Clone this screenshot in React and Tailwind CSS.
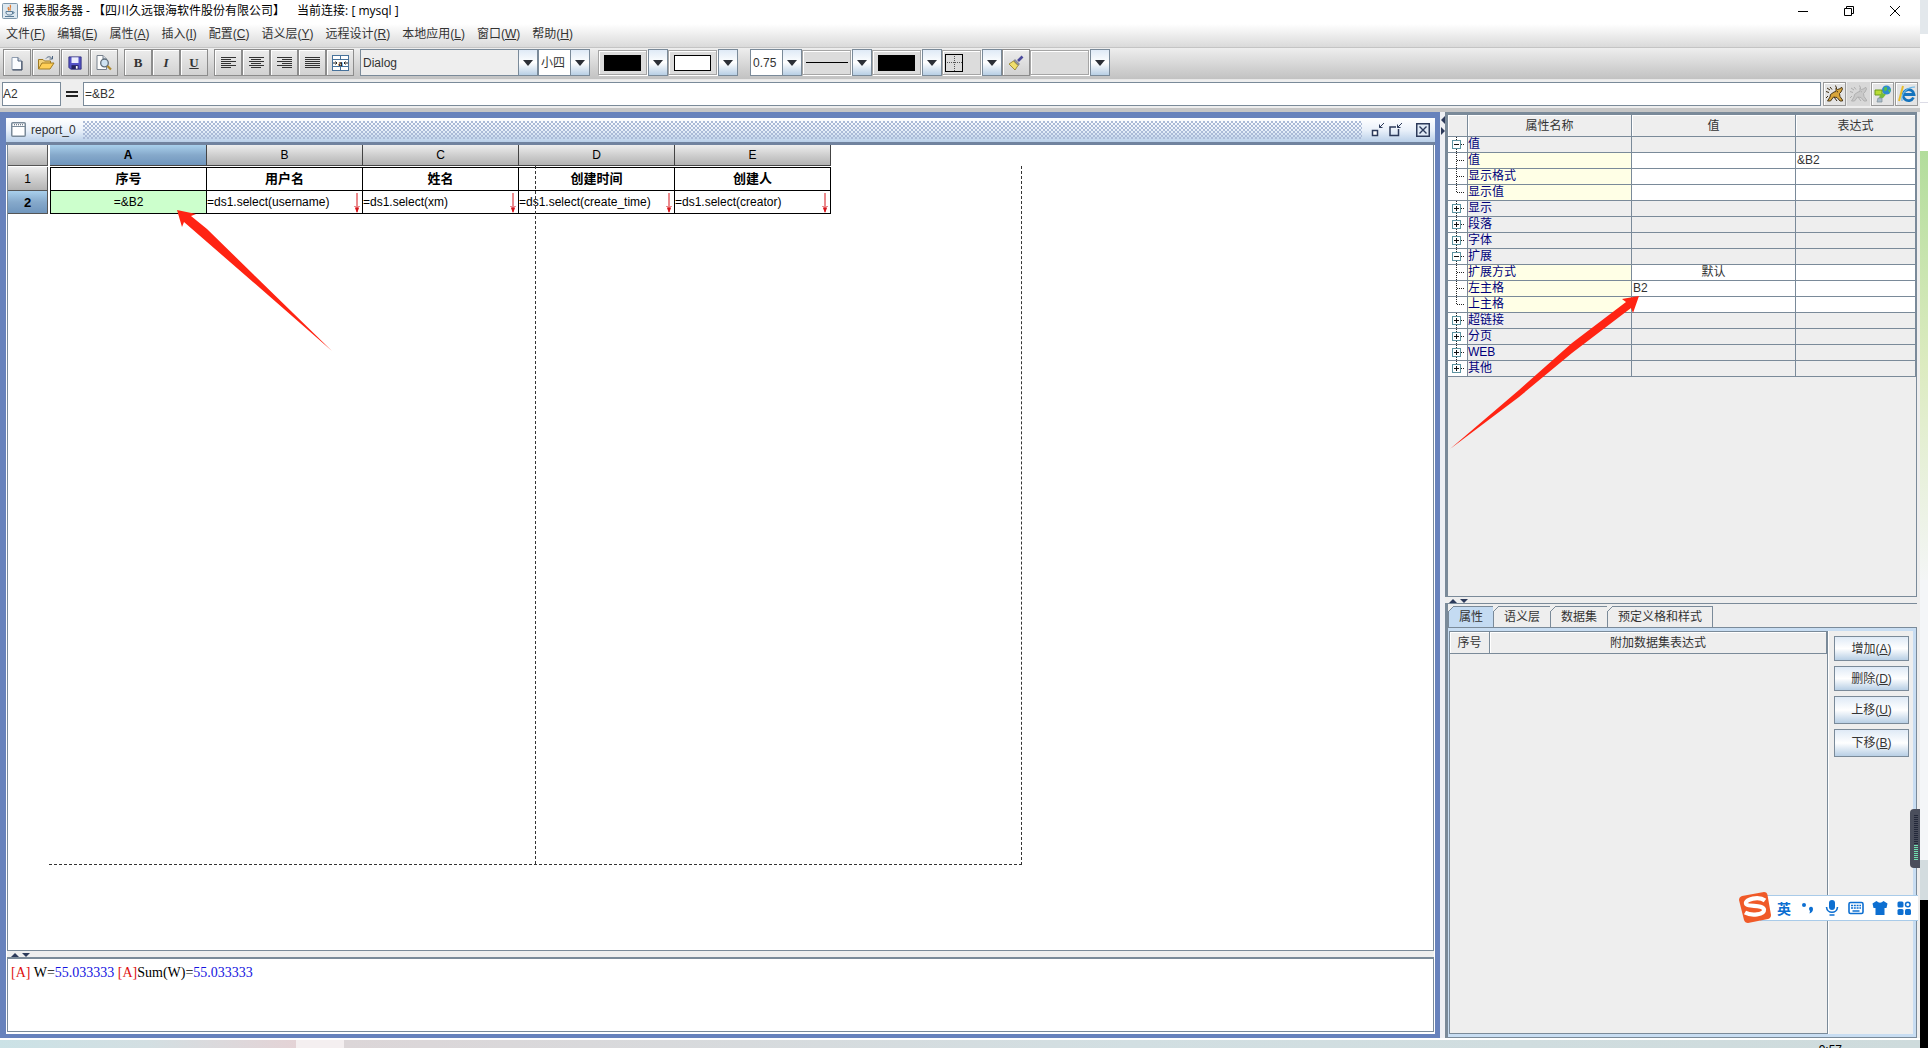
import React from "react";

const MENUS = [
  ["文件", "F"],
  ["编辑", "E"],
  ["属性", "A"],
  ["插入", "I"],
  ["配置", "C"],
  ["语义层", "Y"],
  ["远程设计", "R"],
  ["本地应用", "L"],
  ["窗口", "W"],
  ["帮助", "H"],
];

const COLUMNS = ["A", "B", "C", "D", "E"];
const HEADINGS = ["序号", "用户名", "姓名", "创建时间", "创建人"];
const FORMULAS = [
  "=&B2",
  "=ds1.select(username)",
  "=ds1.select(xm)",
  "=ds1.select(create_time)",
  "=ds1.select(creator)",
];

const PROPERTIES = [
  { name: "值", kind: "open" },
  { name: "值", kind: "leaf", expr: "&B2" },
  { name: "显示格式", kind: "leaf" },
  { name: "显示值", kind: "last" },
  { name: "显示", kind: "closed" },
  { name: "段落", kind: "closed" },
  { name: "字体", kind: "closed" },
  { name: "扩展", kind: "open" },
  { name: "扩展方式", kind: "leaf", value: "默认", center: true },
  { name: "左主格", kind: "leaf", value: "B2" },
  { name: "上主格", kind: "last" },
  { name: "超链接", kind: "closed" },
  { name: "分页", kind: "closed" },
  { name: "WEB", kind: "closed" },
  { name: "其他", kind: "closed", end: true },
];

const toolButton =
  "flex h-[27px] w-7 shrink-0 items-center justify-center border border-[#8c8c8c] bg-gradient-to-b from-[#ececec] to-[#d2d2d2] shadow-[inset_1px_1px_0_#fff]";

function ToolButton({ label, children }) {
  return (
    <button type="button" aria-label={label} className={toolButton}>
      {children}
    </button>
  );
}

function Triangle() {
  return (
    <svg width="10" height="6" viewBox="0 0 10 6" aria-hidden="true">
      <path d="M0 0H10L5 6Z" fill="#2b2f36" />
    </svg>
  );
}

function DropArrow({ label }) {
  return (
    <button
      type="button"
      aria-label={label}
      className="flex h-[27px] w-5 shrink-0 items-center justify-center border border-[#7a8a99] bg-gradient-to-b from-[#dfeaf6] via-white to-[#b8cfe5]"
    >
      <Triangle />
    </button>
  );
}

function Combo({ label, value, className }) {
  return (
    <div className={"relative h-[27px] shrink-0 " + className}>
      <select
        aria-label={label}
        defaultValue={value}
        className="h-full w-full appearance-none border border-[#7a8a99] bg-transparent pl-0.5 text-xs text-[#333] outline-none"
      >
        <option>{value}</option>
      </select>
      <span className="pointer-events-none absolute inset-y-0 right-0 flex w-5 items-center justify-center border border-[#7a8a99] bg-gradient-to-b from-[#dfeaf6] via-white to-[#b8cfe5]">
        <Triangle />
      </span>
    </div>
  );
}

function Picker({ label, width, children }) {
  return (
    <div className="flex shrink-0 items-center gap-px">
      <button
        type="button"
        aria-label={label}
        className={
          "flex h-[25px] items-center border border-[#a5a5a5] bg-[#dcdcdc] shadow-[inset_1px_1px_0_#fff,1px_1px_0_#fff] " + width
        }
      >
        {children}
      </button>
      <DropArrow label={label + "选项"} />
    </div>
  );
}

function AlignIcon({ kind }) {
  const rows = [0, 1, 2, 3, 4, 5];
  return (
    <svg width="15" height="14" viewBox="0 0 15 14" aria-hidden="true">
      {rows.map((i) => {
        const w = kind === "full" || i % 2 === 0 ? 15 : 10;
        const x = kind === "right" ? 15 - w : kind === "center" ? Math.floor((15 - w) / 2) : 0;
        return <rect key={i} x={x} y={i * 2 + 1} width={w} height="1" fill="#333" />;
      })}
    </svg>
  );
}

function JavaIcon() {
  return (
    <svg width="16" height="16" viewBox="0 0 16 16" aria-hidden="true">
      <rect x="0.5" y="0.5" width="15" height="15" rx="1" fill="#dde8f0" stroke="#7d97ab" />
      <path d="M8 2C10 4 6.500 5 8.500 7.500M6.500 4C5.500 5.500 6 6 7 7.500" stroke="#e07a2c" strokeWidth="1.200" fill="none" />
      <path d="M4 8.500H10.500V10C10.500 11.500 9.500 12 7.500 12S4.500 11.500 4 10ZM10.500 9H12C12.500 10 11.500 10.800 10.200 10.800" fill="none" stroke="#5b7c97" strokeWidth="1" />
      <path d="M3 13.500H12" stroke="#5b7c97" />
    </svg>
  );
}

function NewIcon() {
  return (
    <svg width="14" height="16" viewBox="0 0 14 16" aria-hidden="true">
      <path d="M2 2.500H8L11.500 6V14.500H2Z" fill="#fafcff" stroke="#8f9db0" />
      <path d="M12 6V15H2.500" fill="none" stroke="#2e3c55" />
      <path d="M8 2.500V6H11.500" fill="#cdd9e8" stroke="#55657c" />
    </svg>
  );
}

function OpenIcon() {
  return (
    <svg width="18" height="16" viewBox="0 0 18 16" aria-hidden="true">
      <path d="M1.500 14V4.500H6L7.500 6H13.500V8" fill="#f3d27a" stroke="#a07a22" />
      <path d="M1.500 14L5 8H17L13 14Z" fill="#ffcf56" stroke="#a07a22" />
      <path d="M9 3.500C11 1 13.500 1.500 15 3.500M15.500 1V4H12.500" fill="none" stroke="#49627f" />
    </svg>
  );
}

function SaveIcon() {
  return (
    <svg width="14" height="14" viewBox="0 0 16 16" aria-hidden="true">
      <path d="M1 1H15V15H3L1 13Z" fill="#5453c6" stroke="#2e2d7d" />
      <rect x="4" y="1.500" width="8" height="6.500" fill="#eceefd" />
      <rect x="4" y="10.500" width="8" height="4.500" fill="#23235c" />
      <rect x="9" y="11.500" width="2" height="3" fill="#fff" />
    </svg>
  );
}

function PreviewIcon() {
  return (
    <svg width="18" height="17" viewBox="0 0 18 17" aria-hidden="true">
      <path d="M2 1.500H8L11.500 5V15.500H2Z" fill="#fdfdfd" stroke="#77808c" />
      <path d="M8 1.500V5H11.500" fill="#d6dde6" stroke="#77808c" />
      <circle cx="9.500" cy="9" r="3.800" fill="#cfe3f2" stroke="#5f6d7a" strokeWidth="1.300" />
      <path d="M12.500 12L16 15.500" stroke="#b08a2c" strokeWidth="2.200" />
    </svg>
  );
}

function MergeIcon() {
  return (
    <svg width="17" height="16" viewBox="0 0 17 16" aria-hidden="true">
      <rect x="0.500" y="0.500" width="16" height="15" fill="#fff" stroke="#47729b" />
      <path d="M0 4.500H17M0 11.500H17M8.500 0V4.500M8.500 11.500V16" stroke="#47729b" />
      <path d="M1 8H5M3.500 6.500L5 8L3.500 9.500M16 8H12M13.500 6.500L12 8L13.500 9.500" stroke="#222" fill="none" />
      <text x="8.500" y="10.500" textAnchor="middle" fontSize="9" fontWeight="bold" fontFamily="Liberation Serif, serif" fill="#111">
        a
      </text>
    </svg>
  );
}

function BrushIcon() {
  return (
    <svg width="16" height="16" viewBox="0 0 16 16" aria-hidden="true">
      <path d="M10 6L14.500 1.500" stroke="#4b4a9c" strokeWidth="2.600" />
      <path d="M7 4.500L11.500 9L10 10.500L5.500 6Z" fill="#8d91a8" stroke="#555" strokeWidth="0.500" />
      <path d="M5.500 6L10 10.500L7 15L1 9Z" fill="#f0df6c" stroke="#8e7b22" strokeWidth="0.800" />
    </svg>
  );
}

function BullIcon({ body, line }) {
  return (
    <svg width="20" height="20" viewBox="0 0 20 20" aria-hidden="true">
      <path
        d="M11 4L12.500 5.500L15.500 4.500L16.500 3L17.500 5L16 8L14.500 9.500L15 12.500L17.500 16V17H15L12 13.500L8.500 13L5.500 17H2.500L5 13L5.500 10.500L9 8L11 7.500Z"
        fill={body}
        stroke={line}
        strokeWidth="0.900"
      />
      <path d="M2 4L5 6M1 7.500L4 8.500M3 12L1 14M10.500 1.500L11.500 4M9 13L12 17M5 3L7 5.500M12 7.500L13 8" stroke={line} fill="none" />
    </svg>
  );
}

function LinkGlobeIcon() {
  return (
    <svg width="20" height="20" viewBox="0 0 20 20" aria-hidden="true">
      <circle cx="13.500" cy="6" r="4.500" fill="#2f8bd0" />
      <path d="M11 3.500L14 3L14 6L11.500 7.500ZM15 6L18 5L16.500 9Z" fill="#55c24a" />
      <path d="M2 6H9V11H2Z" fill="#b9dc35" stroke="#6c9a1e" />
      <path d="M9 9L13 10.500L10 14H6L7 11Z" fill="#79bd3a" />
      <path d="M5 14H9V18H4Z" fill="#a9bcc9" stroke="#7d8c96" strokeWidth="0.700" />
    </svg>
  );
}

function BrowserIcon() {
  return (
    <svg width="20" height="20" viewBox="0 0 20 20" aria-hidden="true">
      <path d="M16.500 13.500A5.500 5.500 0 1 1 17 10.500H7" fill="none" stroke="#1674bd" strokeWidth="2.800" />
      <path d="M5 17C4 9 10 3 18 3" stroke="#5fb3e8" strokeWidth="1.200" fill="none" />
      <path d="M6 2L2 17" stroke="#e8bd2c" strokeWidth="2" />
    </svg>
  );
}

function DownMarker() {
  return (
    <svg width="6" height="20" viewBox="0 0 6 20" aria-hidden="true" className="absolute bottom-0 right-0.5">
      <path d="M3 0V19M0.500 13L3 15.500L5.500 13" stroke="#d7141a" fill="none" />
      <path d="M1 15H5L3 20Z" fill="#d7141a" />
    </svg>
  );
}

function TreeGlyph({ kind, end }) {
  const branch = kind === "open" || kind === "closed";
  return (
    <svg width="19" height="15" viewBox="0 0 19 15" aria-hidden="true" className="block">
      <path
        d={kind === "last" || end ? "M8.500 0V7" : "M8.500 0V15"}
        stroke="#222"
        strokeDasharray="1 1"
        fill="none"
      />
      <path d="M9 7.500H16" stroke="#222" strokeDasharray="1 1" />
      {branch && (
        <g>
          <rect x="4.500" y="3.500" width="8" height="8" fill="#fff" stroke="#5d93a0" />
          <path d={kind === "open" ? "M6 7.500H11" : "M6 7.500H11M8.500 5V10"} stroke="#111" />
        </g>
      )}
    </svg>
  );
}

function SplitArrows() {
  return (
    <svg width="20" height="4" viewBox="0 0 20 4" aria-hidden="true" className="block">
      <path d="M0 4L4 0L8 4ZM11 0H19L15 4Z" fill="#2c3a5a" />
    </svg>
  );
}

function TitleBar() {
  return (
    <header className="flex h-6 shrink-0 items-center bg-white pb-0.5 pl-0.5 font-['Open_Sans','Noto_Sans_CJK_SC',sans-serif] text-xs text-black">
      <JavaIcon />
      <span className="ml-[5px] whitespace-pre">报表服务器 - 【四川久远银海软件股份有限公司】</span>
      <span className="ml-3 whitespace-pre">当前连接: [ mysql ]</span>
      <div className="ml-auto flex items-center gap-9 pr-5">
        <button type="button" aria-label="最小化">
          <svg width="10" height="10" viewBox="0 0 10 10">
            <path d="M0 5.500H10" stroke="#000" />
          </svg>
        </button>
        <button type="button" aria-label="还原">
          <svg width="10" height="10" viewBox="0 0 10 10">
            <path d="M0.500 2.500H7.500V9.500H0.500ZM2.500 2.500V0.500H9.500V7.500H7.500" stroke="#000" fill="none" />
          </svg>
        </button>
        <button type="button" aria-label="关闭">
          <svg width="10" height="10" viewBox="0 0 10 10">
            <path d="M0 0L10 10M10 0L0 10" stroke="#000" />
          </svg>
        </button>
      </div>
    </header>
  );
}

function MenuBar() {
  return (
    <nav className="flex h-6 shrink-0 items-center gap-3 border-b border-[#c4c4c4] bg-gradient-to-b from-white to-[#dadada] pb-[3px] pl-1.5 text-xs text-[#333]">
      {MENUS.map(([name, key]) => (
        <button key={key} type="button" className="whitespace-nowrap">
          {name}(<u>{key}</u>)
        </button>
      ))}
    </nav>
  );
}

function Toolbar() {
  return (
    <div className="flex h-8 shrink-0 items-center border-b border-[#e8e8e8] bg-gradient-to-b from-[#eee] to-[#c2c2c2] pb-0.5 pl-[3px]">
      <div className="flex gap-px">
        <ToolButton label="新建"><NewIcon /></ToolButton>
        <ToolButton label="打开"><OpenIcon /></ToolButton>
        <ToolButton label="保存"><SaveIcon /></ToolButton>
        <ToolButton label="预览"><PreviewIcon /></ToolButton>
      </div>
      <div className="ml-1.5 flex font-['Liberation_Serif',serif] text-[13px] font-bold text-[#333]">
        <ToolButton label="粗体">B</ToolButton>
        <ToolButton label="斜体"><i>I</i></ToolButton>
        <ToolButton label="下划线"><u>U</u></ToolButton>
      </div>
      <div className="ml-1.5 flex">
        <ToolButton label="左对齐"><AlignIcon kind="left" /></ToolButton>
        <ToolButton label="居中"><AlignIcon kind="center" /></ToolButton>
        <ToolButton label="右对齐"><AlignIcon kind="right" /></ToolButton>
        <ToolButton label="两端对齐"><AlignIcon kind="full" /></ToolButton>
        <ToolButton label="合并单元格"><MergeIcon /></ToolButton>
      </div>
      <Combo label="字体" value="Dialog" className="ml-1.5 w-[178px] bg-[#eee]" />
      <Combo label="字号" value="小四" className="w-[52px] bg-white" />
      <div className="ml-2 flex items-center">
        <Picker label="前景色" width="w-[49px] justify-center">
          <span className="h-4 w-[37px] bg-black" />
        </Picker>
        <Picker label="背景色" width="w-[49px] justify-center">
          <span className="h-4 w-[37px] border border-black bg-white" />
        </Picker>
      </div>
      <Combo label="线宽" value="0.75" className="ml-3 w-[52px] bg-white" />
      <Picker label="线型" width="w-[49px] justify-center">
        <span className="h-px w-[42px] bg-black" />
      </Picker>
      <Picker label="边框颜色" width="w-[49px] justify-center">
        <span className="h-4 w-[37px] bg-black" />
      </Picker>
      <Picker label="边框" width="w-[39px] pl-0.5">
        <svg width="18" height="18" viewBox="0 0 18 18" aria-hidden="true">
          <rect x="0.500" y="0.500" width="17" height="17" fill="none" stroke="#000" />
          <path d="M9.500 2V17M2 8.500H17" stroke="#555" strokeDasharray="1 1" />
        </svg>
      </Picker>
      <ToolButton label="格式刷"><BrushIcon /></ToolButton>
      <Picker label="样式" width="w-[59px]" />
    </div>
  );
}

const actionButton = "flex h-6 w-[23px] items-center justify-center border border-[#9a9a9a] bg-[#e4e4e4] shadow-[inset_1px_1px_0_#fff]";

function FormulaBar() {
  return (
    <div className="flex h-8 shrink-0 items-center border-b-4 border-[#c6c6c6] bg-[#eee] pl-0.5 pr-0.5">
      <input
        aria-label="单元格"
        defaultValue="A2"
        className="h-6 w-[59px] border border-[#7a8a99] bg-white text-xs text-[#333] outline-none"
      />
      <span className="flex w-[22px] flex-col items-center gap-0.5" aria-hidden="true">
        <span className="h-0.5 w-3 bg-[#222]" />
        <span className="h-0.5 w-3 bg-[#222]" />
      </span>
      <input
        aria-label="公式"
        defaultValue="=&amp;B2"
        className="h-6 min-w-0 flex-1 border border-[#7a8a99] bg-white pl-px text-xs text-[#333] outline-none"
      />
      <div className="ml-0.5 flex gap-px">
        <button type="button" aria-label="运行" className={actionButton}><BullIcon body="#d8a53a" line="#3b2a10" /></button>
        <button type="button" aria-label="停止" disabled className="flex h-6 w-[23px] items-center justify-center bg-[#d8d8d8]">
          <BullIcon body="#c9c9c9" line="#adadad" />
        </button>
        <button type="button" aria-label="发布" className={actionButton}><LinkGlobeIcon /></button>
        <button type="button" aria-label="浏览器" className={actionButton}><BrowserIcon /></button>
      </div>
    </div>
  );
}

function FrameTitle() {
  return (
    <div className="flex h-[27px] shrink-0 items-center border-b-[3px] border-[#71839f] bg-gradient-to-b from-white via-[#eaf1fa] to-[#b9cfe8] pb-px pl-[5px] pr-[5px] text-xs text-[#333]">
      <svg width="15" height="15" viewBox="0 0 15 15" aria-hidden="true">
        <rect x="0.750" y="0.750" width="13.500" height="13.500" rx="1" fill="#fff" stroke="#7a8a99" strokeWidth="1.500" />
        <path d="M1 4.500H14" stroke="#7a8a99" />
        <path d="M3 2.750H12" stroke="#44546a" strokeDasharray="1 1" />
      </svg>
      <span className="ml-[5px]">report_0</span>
      <span className="ml-[7px] mr-2 h-[18px] flex-1 bg-[radial-gradient(circle_at_1px_1px,#a9b9d6_0.7px,transparent_1px),radial-gradient(circle_at_3px_3px,#a9b9d6_0.7px,transparent_1px)] bg-[size:4px_4px]" />
      <div className="flex items-center gap-0.5">
        <button type="button" aria-label="图标化">
          <svg width="16" height="16" viewBox="0 0 16 16">
            <rect x="2.500" y="8.500" width="5" height="5" fill="#fff" stroke="#2c3a5a" strokeWidth="1.500" />
            <path d="M14 1L9.500 5.500M9.500 2.500V5.500H12.500" fill="none" stroke="#2c3a5a" />
          </svg>
        </button>
        <button type="button" aria-label="最大化">
          <svg width="16" height="16" viewBox="0 0 16 16">
            <path d="M8 5H2V13.500H10.500V7" fill="none" stroke="#2c3a5a" strokeWidth="1.500" />
            <path d="M14 1L9.500 5.500M9.500 2.500V5.500H12.500" fill="none" stroke="#2c3a5a" />
          </svg>
        </button>
        <button type="button" aria-label="关闭报表" className="ml-2.5">
          <svg width="14" height="14" viewBox="0 0 14 14">
            <rect x="0.750" y="0.750" width="12.500" height="12.500" fill="#dfe9f5" stroke="#2c3a5a" strokeWidth="1.500" />
            <path d="M3.500 3.500L10.500 10.500M10.500 3.500L3.500 10.500" stroke="#2c3a5a" strokeWidth="1.400" />
          </svg>
        </button>
      </div>
    </div>
  );
}

const headGray = "bg-gradient-to-b from-[#eee] via-[#cfcfcf] to-[#b4b4b4]";
const headBlue = "bg-gradient-to-b from-[#a9d0ec] via-[#86a9cb] to-[#7096bd]";

function Sheet() {
  return (
    <div className="relative min-h-0 flex-1 overflow-hidden border-x border-b border-[#7a8a99] bg-white">
      <table className="table-fixed border-separate border-spacing-0 text-[13px] leading-4 text-black">
        <colgroup>
          <col className="w-[42px]" />
          <col className="w-[157px]" />
          <col className="w-[156px]" />
          <col className="w-[156px]" />
          <col className="w-[156px]" />
          <col className="w-[156px]" />
        </colgroup>
        <thead>
          <tr>
            <th className="h-[22px] pb-px pr-0.5 pt-0">
              <div className={"h-[21px] border-b border-r border-[#555] " + headGray} />
            </th>
            {COLUMNS.map((c, i) => (
              <th key={c} scope="col" className="h-[22px] p-0 pb-px text-xs">
                <div
                  className={
                    "h-[21px] border-b border-r border-[#444] leading-5 " +
                    (i === 0 ? "font-bold " + headBlue : "font-normal " + headGray)
                  }
                >
                  {c}
                </div>
              </th>
            ))}
          </tr>
        </thead>
        <tbody>
          <tr>
            <th scope="row" className="h-6 p-0 pr-0.5 text-xs font-normal">
              <div className={"h-6 border-b border-r border-[#555] leading-6 " + headGray}>1</div>
            </th>
            {HEADINGS.map((h, i) => (
              <td
                key={h}
                className={"h-6 border-b border-r border-t border-black p-0 text-center font-bold " + (i === 0 ? "border-l" : "")}
              >
                {h}
              </td>
            ))}
          </tr>
          <tr>
            <th scope="row" className="h-[23px] p-0 pr-0.5 font-bold">
              <div className={"h-[23px] border-b border-r border-[#555] leading-6 " + headBlue}>2</div>
            </th>
            {FORMULAS.map((f, i) => (
              <td
                key={f}
                className={
                  "relative h-[23px] whitespace-nowrap border-b border-r border-black p-0 text-xs " +
                  (i === 0 ? "border-l bg-[#ccffcc] text-center" : "text-left")
                }
              >
                {f}
                {i > 0 && <DownMarker />}
              </td>
            ))}
          </tr>
        </tbody>
      </table>
      <div className="pointer-events-none absolute left-[41px] top-[21px] h-[699px] w-[973px] border-b border-r border-dashed border-[#333]">
        <div className="ml-auto h-full w-1/2 border-l border-dashed border-[#333]" />
      </div>
    </div>
  );
}

function StatusPane() {
  return (
    <div className="h-[75px] shrink-0 border-x border-b border-t-2 border-[#7a8a99] bg-white pl-[3px] pt-1.5 font-['Liberation_Serif',serif] text-sm leading-4 text-black">
      <span className="text-[#e01010]">[A]</span> W=<span className="text-[#1414e0]">55.033333</span>{" "}
      <span className="text-[#e01010]">[A]</span>Sum(W)=<span className="text-[#1414e0]">55.033333</span>
    </div>
  );
}

function ReportFrame() {
  return (
    <section className="flex min-w-0 flex-1 flex-col border-b-4 border-l-[6px] border-r-[5px] border-t-[6px] border-[#6782bc] bg-white">
      <FrameTitle />
      <div className="flex min-h-0 flex-1 flex-col bg-white pb-0.5 pl-px pr-px">
        <Sheet />
        <div className="flex h-1.5 shrink-0 items-end bg-[#eee] pl-1">
          <SplitArrows />
        </div>
        <StatusPane />
      </div>
    </section>
  );
}

const gridLine = "border-b border-r border-[#7a8a99]";

function PropertyTable() {
  return (
    <div className="h-[485px] shrink-0 border-b border-l-[3px] border-r border-t-[3px] border-[#7a8a99] bg-[#eee]">
      <table className="w-full table-fixed border-separate border-spacing-0 text-left text-xs leading-[15px] text-[#333]">
        <colgroup>
          <col className="w-5" />
          <col className="w-[164px]" />
          <col className="w-[164px]" />
          <col />
        </colgroup>
        <thead>
          <tr>
            {["", "属性名称", "值", "表达式"].map((h) => (
              <th key={h} scope="col" className={"h-[22px] p-0 pt-0.5 text-center font-normal shadow-[inset_1px_1px_0_#fff] " + gridLine}>
                {h}
              </th>
            ))}
          </tr>
        </thead>
        <tbody>
          {PROPERTIES.map((p, i) => {
            const leaf = p.kind === "leaf" || p.kind === "last";
            const cell = "h-4 p-0 " + gridLine + (leaf ? " bg-white" : "");
            return (
              <tr key={i}>
                <td className={"h-4 bg-white p-0 " + gridLine}>
                  <TreeGlyph kind={p.kind} end={p.end} />
                </td>
                <td className={"h-4 p-0 text-[#00007a] " + gridLine + (leaf ? " bg-[#ffffe6]" : "")}>{p.name}</td>
                <td className={cell + (p.center ? " text-center" : " pl-px")}>{p.value}</td>
                <td className={cell + " pl-px"}>{p.expr}</td>
              </tr>
            );
          })}
        </tbody>
      </table>
    </div>
  );
}

function Tabs() {
  const tabs = ["属性", "语义层", "数据集", "预定义格和样式"];
  return (
    <div role="tablist" className="flex h-6 shrink-0 items-end border-l-[3px] border-t border-[#7a8a99] bg-[#eee] text-xs text-[#333]">
      {tabs.map((t, i) => (
        <button
          key={t}
          role="tab"
          type="button"
          aria-selected={i === 0}
          className={
            "relative h-[21px] whitespace-nowrap border-r border-t border-[#7a8a99] px-2.5 " +
            (i === 0 ? "border-l bg-[#c4dbf2]" : "bg-[#eee]")
          }
        >
          {t}
          <svg width="6" height="6" viewBox="0 0 6 6" aria-hidden="true" className="absolute -left-px -top-px">
            <path d="M0 0H6L0 6Z" fill="#eee" />
            <path d="M0 6L6 0" stroke="#7a8a99" />
          </svg>
        </button>
      ))}
    </div>
  );
}

const SIDE_BUTTONS = [
  ["增加", "A", "h-[25px]"],
  ["删除", "D", "h-[25px]"],
  ["上移", "U", "h-7"],
  ["下移", "B", "h-7"],
];

function DatasetPanel() {
  return (
    <div className="flex min-h-0 flex-1 border-b border-l-[3px] border-r border-t border-[#7a8a99] bg-[#eee]">
      <div className="flex min-w-0 flex-1 border-b-[3px] border-l border-r-[3px] border-t-[3px] border-[#c8ddf2]">
        <div className="min-w-0 flex-1 border border-[#7a8a99]">
          <table className="w-full table-fixed border-separate border-spacing-0 text-xs text-[#333]">
            <colgroup>
              <col className="w-10" />
              <col />
            </colgroup>
            <thead>
              <tr>
                {["序号", "附加数据集表达式"].map((h) => (
                  <th key={h} scope="col" className={"h-[22px] p-0 font-normal shadow-[inset_1px_1px_0_#fff] " + gridLine}>
                    {h}
                  </th>
                ))}
              </tr>
            </thead>
          </table>
        </div>
        <div className="flex w-[85px] shrink-0 flex-col gap-[5px] border-l border-white pl-[5px] pr-1 pt-[5px] text-xs text-[#333]">
          {SIDE_BUTTONS.map(([name, key, h]) => (
            <button
              key={key}
              type="button"
              className={"border border-[#7a8a99] bg-gradient-to-b from-[#dfeaf6] via-white to-[#b8cfe5] " + h}
            >
              {name}(<u>{key}</u>)
            </button>
          ))}
        </div>
      </div>
    </div>
  );
}

function InputMethodBar() {
  const blue = "#0d6fd1";
  return (
    <div className="absolute right-0.5 top-[892px] flex h-[31px] items-center">
      <svg width="33" height="31" viewBox="0 0 33 31" aria-hidden="true" className="relative z-10">
        <path d="M3 4L25 0Q28 0 28.500 3L32 23Q32 26 29 27L9 31Q6 31 5 28L0 8Q0 5 3 4Z" fill="#f05a28" />
        <path
          d="M26 8.500C20 4 6 7 7 11.500C8 15.500 24 12 25 17.500C25.500 23 12 24 6 20.500"
          fill="none"
          stroke="#fff"
          strokeWidth="4.200"
        />
      </svg>
      <div className="-ml-3 flex h-[26px] items-center gap-2 border-y border-[#a9cbe9] bg-white pl-4 pr-1.5">
        <span className="w-4 text-center font-['Noto_Sans_CJK_SC',sans-serif] text-sm font-bold leading-4 text-[#0d6fd1]">英</span>
        <svg width="16" height="16" viewBox="0 0 16 16" aria-hidden="true">
          <circle cx="4" cy="5" r="2" fill={blue} />
          <path d="M9 8.500A2 2 0 1 1 13 9Q13 12 9.500 13.500L10 11Q9 10 9 8.500Z" fill={blue} />
        </svg>
        <svg width="16" height="16" viewBox="0 0 16 16" aria-hidden="true">
          <rect x="5" y="0" width="6" height="10" rx="3" fill={blue} />
          <path d="M2.500 7C3 14 13 14 13.500 7M5.500 15H10.500" fill="none" stroke={blue} strokeWidth="1.600" />
        </svg>
        <svg width="16" height="16" viewBox="0 0 16 16" aria-hidden="true">
          <rect x="1" y="2.500" width="14" height="11" rx="1.500" fill="#fff" stroke={blue} strokeWidth="1.600" />
          <path d="M3 5.500H13M3 8H13" stroke={blue} strokeWidth="1.500" strokeDasharray="2 0.800" />
          <path d="M4.500 11H11.500" stroke={blue} strokeWidth="1.500" />
        </svg>
        <svg width="16" height="16" viewBox="0 0 16 16" aria-hidden="true">
          <path d="M4.500 1Q8 4.500 11.500 1L15.500 3.500L14.500 8H12.500V15H3.500V8H1.500L0.500 3.500Z" fill={blue} />
        </svg>
        <svg width="16" height="16" viewBox="0 0 16 16" aria-hidden="true">
          <rect x="1.500" y="1.500" width="6" height="6" rx="1.500" fill={blue} />
          <circle cx="11.800" cy="4.500" r="2.300" fill="none" stroke={blue} strokeWidth="1.500" />
          <rect x="1.500" y="9" width="6" height="6" rx="1.500" fill={blue} />
          <rect x="9" y="9" width="6" height="6" rx="1.500" fill={blue} />
        </svg>
      </div>
    </div>
  );
}

function LevelWidget() {
  return (
    <div className="absolute right-0 top-[809px] flex h-[59px] w-2.5 flex-col items-end rounded-l bg-[#4a4e5c] py-1.5 pr-0.5">
      <div className="h-[30px] w-1 bg-[repeating-linear-gradient(#23283a_0_1px,#4a4e5c_1px_2px)]" />
      <div className="h-4 w-1 bg-[repeating-linear-gradient(#6fe0b0_0_1px,#4a4e5c_1px_2px)]" />
    </div>
  );
}

function Pointers() {
  return (
    <>
      <svg width="156" height="142" viewBox="0 0 156 142" aria-hidden="true" className="pointer-events-none absolute left-[177px] top-[210px]">
        <path d="M0 0L19 4L14 6L30 19L76 64L155 141L76 72L30 32L7 12L5 17Z" fill="#ff2413" />
      </svg>
      <svg width="190" height="154" viewBox="0 0 190 154" aria-hidden="true" className="pointer-events-none absolute right-[280px] top-[296px]">
        <path d="M189 0L172 3L176 6L122 47L69 94L0 153L69 101L122 57L181 12L183 17Z" fill="#ff2413" />
      </svg>
    </>
  );
}

export default function App() {
  return (
    <div className="flex h-screen w-full overflow-hidden bg-white font-['Liberation_Sans','Noto_Sans_CJK_SC',sans-serif]">
      <div className="relative flex min-w-0 flex-1 flex-col">
        <TitleBar />
        <MenuBar />
        <Toolbar />
        <FormulaBar />
        <main className="flex min-h-0 flex-1 bg-[#eee]">
          <ReportFrame />
          <div className="w-[5px] shrink-0 bg-[#eef0f4] pt-1">
            <svg width="5" height="20" viewBox="0 0 5 20" aria-hidden="true">
              <path d="M5 0V8L1 4ZM1 11L5 15L1 19Z" fill="#2c3a5a" />
            </svg>
          </div>
          <aside className="flex w-[475px] shrink-0 flex-col pr-[3px]">
            <PropertyTable />
            <div className="flex h-1.5 shrink-0 items-end pl-1">
              <SplitArrows />
            </div>
            <Tabs />
            <DatasetPanel />
          </aside>
        </main>
        <footer className="flex h-2.5 shrink-0 border-t-2 border-white text-xs leading-3 text-black">
          <div className="w-[296px] bg-gradient-to-r from-[#cbe2e6] via-[#d3dfe2] to-[#e4d3d6]" />
          <div className="w-12 bg-[#f4eff0]" />
          <div className="flex flex-1 justify-end bg-gradient-to-r from-[#dcd6d8] via-[#d2dfe2] to-[#cedbdc] pr-[78px]">
            <time className="pt-1">9:57</time>
          </div>
        </footer>
        <Pointers />
        <LevelWidget />
        <InputMethodBar />
      </div>
      <div className="flex w-2 shrink-0 flex-col" aria-hidden="true">
        <div className="h-[34px] bg-[#e3e8ec]" />
        <div className="h-[69px] border-b border-[#dcdce6] bg-white" />
        <div className="h-12 bg-white" />
        <div className="h-[429px] bg-gradient-to-b from-[#b2dd9c] via-[#dcebc0] to-[#f4f6f6]" />
        <div className="h-[280px] bg-[#f4f6f8]" />
        <div className="h-10 bg-[#d3dcdf]" />
        <div className="flex-1 bg-black" />
      </div>
    </div>
  );
}
